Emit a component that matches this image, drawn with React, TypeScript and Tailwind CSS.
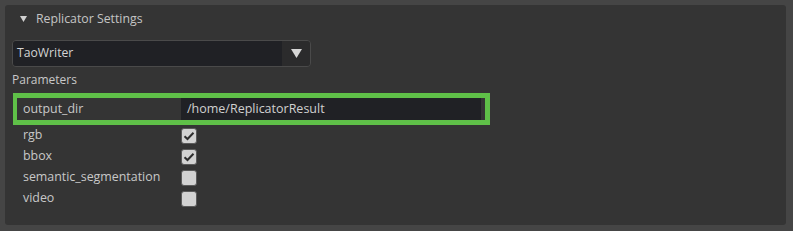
const font = { fontFamily: '"Open Sans", "Noto Sans", sans-serif' };

function CheckBox({ checked }: { checked: boolean }) {
    return (
        <div className="flex h-[16px] w-[16px] items-center justify-center rounded-[3px] border border-[#5a5a5a] bg-[#d2d2d2]">
            {checked && (
                <svg width="12" height="10" viewBox="0 0 12 10">
                    <path d="M1.5 5.2 L4.5 8 L10.5 1.8" fill="none" stroke="#2e2e2e" strokeWidth="2" />
                </svg>
            )}
        </div>
    );
}

const rows = [
    { name: 'rgb', checked: true },
    { name: 'bbox', checked: true },
    { name: 'semantic_segmentation', checked: false },
    { name: 'video', checked: false },
];

export default function App() {
    return (
        <div className="h-[231px] w-[793px] bg-[#454545] pl-[5px] pt-[5px] text-[#c8c8c8]" style={font}>
            <div className="h-[220px] w-[781px] rounded-[3px] bg-[#343434] pl-[7px]">
                {/* Header */}
                <div className="flex h-[28px] items-center pl-[8px]">
                    <svg width="7" height="6" viewBox="0 0 7 6">
                        <path d="M0 0 H7 L3.5 6 Z" fill="#d0d0d0" />
                    </svg>
                    <span className="ml-[9px] text-[12.3px] text-[#c4c4c4]">Replicator Settings</span>
                </div>

                {/* Writer combo */}
                <div className="mt-[7px] flex h-[27px] w-[299px] overflow-hidden rounded-[4px] border border-[#4a4a4a]">
                    <div className="flex flex-1 items-center bg-[#202125] pl-[4px] text-[12.2px] text-[#d4d4d4]">
                        TaoWriter
                    </div>
                    <div className="flex w-[28px] items-center justify-center bg-[#2b2b2c]">
                        <svg width="11" height="9" viewBox="0 0 11 9">
                            <path d="M0 0 H11 L5.5 9 Z" fill="#d6d6d6" />
                        </svg>
                    </div>
                </div>

                <div className="mt-[4px] flex h-[18px] items-center text-[12px]">Parameters</div>

                {/* output_dir, highlighted */}
                <div className="ml-[1px] mt-[4px] flex h-[32px] w-[477px] border-[5px] border-l-4 border-[#5fc048] bg-[#343434] pr-[4px]">
                    <div className="flex w-[164px] items-center pl-[6px] text-[12.4px]">output_dir</div>
                    <div className="flex flex-1 items-center bg-[#202125] pl-[6px] text-[12.5px] text-[#d0d0d0]">
                        /home/ReplicatorResult
                    </div>
                </div>

                {rows.map(r => (
                    <div key={r.name} className="flex h-[21px] items-center pl-[11px] text-[12.4px]">
                        <span className="w-[158px]">{r.name}</span>
                        <CheckBox checked={r.checked} />
                    </div>
                ))}
            </div>
        </div>
    );
}
